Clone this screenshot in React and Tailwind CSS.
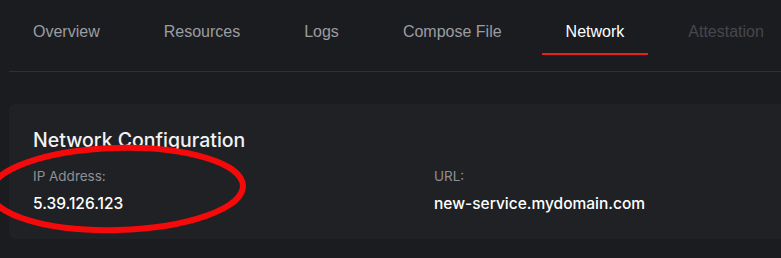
import React from "react";

const tabs = [
  { label: "Overview", state: "idle" },
  { label: "Resources", state: "idle" },
  { label: "Logs", state: "idle" },
  { label: "Compose File", state: "idle" },
  { label: "Network", state: "active" },
  { label: "Attestation", state: "disabled" },
];

export default function App() {
  return (
    <div className="relative w-[781px] h-[258px] overflow-hidden bg-[#1b1c20] pl-[9px]">
      <nav className="flex gap-4 border-b border-[#2e3036] w-[900px] font-['Liberation_Sans',Arial,sans-serif] text-base">
        {tabs.map((t) => (
          <div key={t.label} className="flex flex-col px-6 pt-5">
            <span
              className={
                "leading-6 whitespace-nowrap " +
                (t.state === "active"
                  ? "text-white"
                  : t.state === "disabled"
                  ? "text-[#46474c]"
                  : "text-[#9c9da1]")
              }
            >
              {t.label}
            </span>
            <div
              className={
                "mt-[9px] mb-4 h-[2px] -mx-6 " +
                (t.state === "active" ? "bg-[#e8201c]" : "bg-transparent")
              }
            />
          </div>
        ))}
      </nav>

      <section className="mt-8 w-[900px] h-[135px] rounded-md bg-[#1f2125] px-6 pt-[22px] font-['Inter',sans-serif]">
        <h2 className="text-[19.5px] leading-7 font-medium text-[#f2f2f3]">Network Configuration</h2>
        <div className="mt-[12px] grid grid-cols-[401px_1fr]">
          <div>
            <div className="text-[13.5px] leading-5 text-[#8f9095]">IP Address:</div>
            <div className="mt-[6px] text-[15.5px] leading-6 font-medium text-white">5.39.126.123</div>
          </div>
          <div>
            <div className="text-[13.5px] leading-5 text-[#8f9095]">URL:</div>
            <div className="mt-[6px] text-[15.5px] leading-6 font-medium text-white">new-service.mydomain.com</div>
          </div>
        </div>
      </section>

      <svg
        className="absolute left-0 top-0 pointer-events-none"
        width="781"
        height="258"
        viewBox="0 0 781 258"
      >
        <ellipse
          cx="117"
          cy="189"
          rx="126"
          ry="41"
          fill="none"
          stroke="#f40a0a"
          strokeWidth="6"
          transform="rotate(-1.5 117 189)"
        />
      </svg>
    </div>
  );
}
